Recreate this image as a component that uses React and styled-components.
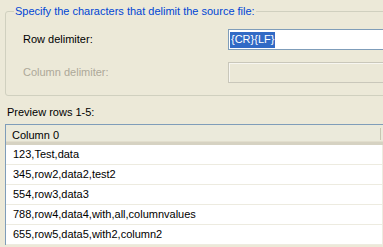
import styled, { createGlobalStyle } from 'styled-components';

const GlobalStyle = createGlobalStyle`
  html, body {
    margin: 0;
    padding: 0;
    background: #ece9d8;
    overflow: hidden;
  }
  body {
    font-family: "Liberation Sans", Arial, sans-serif;
    font-size: 11px;
    color: #000;
  }
`;

const rows = [
  '123,Test,data',
  '345,row2,data2,test2',
  '554,row3,data3',
  '788,row4,data4,with,all,columnvalues',
  '655,row5,data5,with2,column2',
];

const Page = styled.div`
  width: 383px;
  height: 247px;
  overflow: hidden;
  padding-top: 5px;
  box-sizing: border-box;
  line-height: 13px;
`;

const Group = styled.fieldset`
  margin: 0 -20px 0 5px;
  padding: 11px 0 12px 17px;
  border: 1px solid #d0d0bf;
  border-radius: 3px;
  min-width: 0;
`;

const Legend = styled.legend`
  padding: 0 1px;
  margin-left: -9px;
  color: #0046d5;
  line-height: 13px;
`;

const FieldRow = styled.div`
  display: grid;
  grid-template-columns: 205px 1fr;
  align-items: center;
  height: 21px;
  & + & {
    margin-top: 12px;
  }
`;

const Label = styled.span`
  color: ${(p) => (p.$disabled ? '#aca899' : '#000')};
`;

const TextBox = styled.div`
  height: 21px;
  box-sizing: border-box;
  border: 1px solid ${(p) => (p.$disabled ? '#c9c7ba' : '#7f9db9')};
  background: ${(p) => (p.$disabled ? '#ebe8d7' : '#fff')};
  box-shadow: ${(p) => (p.$disabled ? 'inset 1px 1px 0 #f7f6f0' : 'none')};
  padding: 2px 1px;
  display: flex;
  align-items: center;
`;

const Selection = styled.span`
  background: #316ac5;
  color: #fff;
  padding: 1px 1px 2px;
  line-height: 13px;
`;

const PreviewLabel = styled.div`
  margin: 10px 0 0 7px;
`;

const Table = styled.div`
  margin: 5px 0 0 5px;
  border-left: 1px solid #7f9db9;
  border-top: 1px solid #7f9db9;
  background: #fff;
`;

const Header = styled.div`
  display: flex;
  height: 17px;
  background: #ebeadb;
  border-bottom: 3px solid #d6d2c2;
  box-shadow: inset 0 -1px 0 #e2decd;
`;

const HeaderCell = styled.div`
  width: 375px;
  padding: 4px 0 0 6px;
  box-sizing: border-box;
  position: relative;
  &::after {
    content: '';
    position: absolute;
    right: 0;
    top: 3px;
    bottom: 2px;
    width: 1px;
    background: #c7c5b2;
  }
`;

const Row = styled.div`
  display: flex;
  height: 20px;
  box-sizing: border-box;
  border-bottom: 1px solid #edebe0;
`;

const Cell = styled.div`
  width: 377px;
  padding: 3px 0 0 7px;
  box-sizing: border-box;
  border-right: 1px solid #edebe0;
`;

export default function App() {
  return (
    <>
      <GlobalStyle />
      <Page>
        <Group>
          <Legend>Specify the characters that delimit the source file:</Legend>
          <FieldRow>
            <Label>Row delimiter:</Label>
            <TextBox>
              <Selection>{'{CR}{LF}'}</Selection>
            </TextBox>
          </FieldRow>
          <FieldRow>
            <Label $disabled>Column delimiter:</Label>
            <TextBox $disabled />
          </FieldRow>
        </Group>
        <PreviewLabel>Preview rows 1-5:</PreviewLabel>
        <Table>
          <Header>
            <HeaderCell>Column 0</HeaderCell>
          </Header>
          {rows.map((r) => (
            <Row key={r}>
              <Cell>{r}</Cell>
            </Row>
          ))}
        </Table>
      </Page>
    </>
  );
}
